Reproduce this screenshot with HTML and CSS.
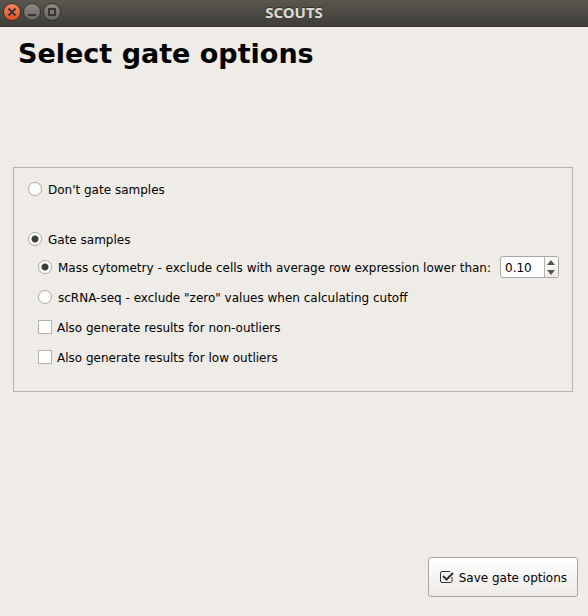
FILE: index.html
```html
<!DOCTYPE html>
<html lang="en">
<head>
<meta charset="utf-8">
<title>SCOUTS</title>
<link rel="stylesheet" href="styles.css">
</head>
<body>
<header class="titlebar">
  <div class="window-controls">
    <button class="control control-close" type="button" aria-label="Close">
      <svg viewBox="0 0 18 18"><path d="M5.500 5.500l7 7M12.500 5.500l-7 7"/></svg>
    </button>
    <button class="control" type="button" aria-label="Minimize">
      <svg viewBox="0 0 18 18"><path d="M5 12h8"/></svg>
    </button>
    <button class="control" type="button" aria-label="Maximize">
      <svg viewBox="0 0 18 18"><path d="M6 6h6v6H6z"/></svg>
    </button>
  </div>
  <span class="window-title">SCOUTS</span>
</header>
<main class="content">
  <h1 class="heading">Select gate options</h1>
  <form class="form">
    <div class="panel">
      <label class="option"><input class="radio" type="radio" name="gate">Don't gate samples</label>
      <label class="option option-gate"><input class="radio" type="radio" name="gate" checked>Gate samples</label>
      <div class="suboptions">
        <div class="row">
          <label class="option"><input class="radio" type="radio" name="method" checked>Mass cytometry - exclude cells with average row expression lower than:</label>
          <div class="spinbox">
            <input class="spin-value" type="text" value="0.10" aria-label="Minimum average row expression">
            <div class="spin-buttons">
              <button class="spin-button" type="button" aria-label="Increase"><svg viewBox="0 0 8 5"><path d="M0 5l4-5 4 5z"/></svg></button>
              <button class="spin-button" type="button" aria-label="Decrease"><svg viewBox="0 0 8 5"><path d="M0 0l4 5 4-5z"/></svg></button>
            </div>
          </div>
        </div>
        <label class="option"><input class="radio" type="radio" name="method">scRNA-seq - exclude "zero" values when calculating cutoff</label>
        <label class="option"><input class="checkbox" type="checkbox">Also generate results for non-outliers</label>
        <label class="option"><input class="checkbox" type="checkbox">Also generate results for low outliers</label>
      </div>
    </div>
    <button class="save" type="button">
      <svg class="save-icon" viewBox="0 0 14 14"><path class="save-box" d="M10 1.500H2a1.500 1.500 0 0 0-1.500 1.500v8A1.500 1.500 0 0 0 2 12.500h8.500a1.500 1.500 0 0 0 1.500-1.500V7"/><path class="save-tick" d="M3 6l3.500 3.500L13 3"/></svg>
      <span class="save-label">Save gate options</span>
    </button>
  </form>
</main>
</body>
</html>
```
FILE: styles.css
```css
* {
  box-sizing: border-box;
}

body {
  margin: 0;
  min-height: 100vh;
  display: flex;
  flex-direction: column;
  background: #efebe7;
  color: #000;
  font: 12px/24px "DejaVu Sans", sans-serif;
}

button,
input {
  margin: 0;
  padding: 0;
  color: inherit;
  font: inherit;
}

.titlebar {
  display: grid;
  grid-template-columns: 1fr auto 1fr;
  align-items: center;
  height: 27px;
  padding: 0 3px 3px;
  background: linear-gradient(#5a564e, #3e3d39);
  border-bottom: 1px solid #393834;
}

.window-controls {
  display: flex;
  gap: 2px;
}

.control {
  width: 18px;
  height: 18px;
  border: 1px solid #35332f;
  border-radius: 50%;
  background: linear-gradient(#8b8982, #66645e);
}

.control-close {
  background: linear-gradient(#f58560, #e6501f);
}

.control svg {
  display: block;
  margin: -1px;
  width: 18px;
  height: 18px;
  fill: none;
  stroke: #3a3732;
  stroke-width: 2;
}

.window-title {
  color: #dfdbd2;
  font: bold 15px/18px "Noto Sans", sans-serif;
  text-shadow: 0 -1px #33322e;
}

.content {
  flex: 1;
  display: flex;
  flex-direction: column;
  padding: 9px 10px 19px 13px;
}

.heading {
  margin: 0 5px 95px;
  font-size: 27px;
  line-height: 36px;
}

.form {
  flex: 1;
  display: flex;
  flex-direction: column;
}

.panel {
  display: flex;
  flex-direction: column;
  margin-right: 5px;
  padding: 10px 13px 23px 14px;
  border: 1px solid #b6b3af;
}

.option {
  display: flex;
  align-items: flex-start;
  height: 22px;
  white-space: nowrap;
}

.option-gate {
  margin-top: 28px;
}

.suboptions {
  display: flex;
  flex-direction: column;
  gap: 8px;
  margin: 6px 0 0 10px;
}

.row {
  display: flex;
  justify-content: space-between;
}

.radio,
.checkbox {
  appearance: none;
  flex: none;
  width: 14px;
  height: 14px;
  border: 1px solid #aaa7a3;
  background: #fff;
}

.radio {
  margin: 4px 6px 0 0;
  border-radius: 50%;
}

.radio:checked {
  background: radial-gradient(circle, #3c3c3c 3px, #fff 4px);
}

.checkbox {
  margin: 4px 5px 0 0;
  border-color: #b6b3af;
}

.spinbox {
  display: flex;
  width: 59px;
  height: 22px;
  border: 1px solid #aaa7a3;
  border-radius: 3px;
  background: #fff;
  overflow: hidden;
}

.spin-value {
  flex: 1;
  min-width: 0;
  padding: 2px 0 0 4px;
  border: 0;
  background: none;
  line-height: 18px;
}

.spin-buttons {
  display: flex;
  flex-direction: column;
  width: 14px;
  padding: 1px 1px 0 0;
  border-left: 1px solid #b6b3af;
  background: linear-gradient(#fcfcfb, #efedea);
}

.spin-button {
  flex: 1;
  display: flex;
  align-items: center;
  justify-content: center;
  border: 0;
  background: none;
}

.spin-button svg {
  width: 8px;
  height: 5px;
  fill: #555;
}

.save {
  display: flex;
  align-items: center;
  justify-content: center;
  gap: 5px;
  align-self: flex-end;
  height: 40px;
  margin-top: auto;
  padding: 0 10px 0 11px;
  border: 1px solid #a9a6a2;
  border-radius: 3px;
  background: linear-gradient(#fff, #edeae7);
}

.save-icon {
  width: 14px;
  height: 14px;
  fill: none;
}

.save-box {
  stroke: #333;
}

.save-tick {
  stroke: #333;
  stroke-width: 2;
}

.save-label {
  padding-top: 2px;
}
```
